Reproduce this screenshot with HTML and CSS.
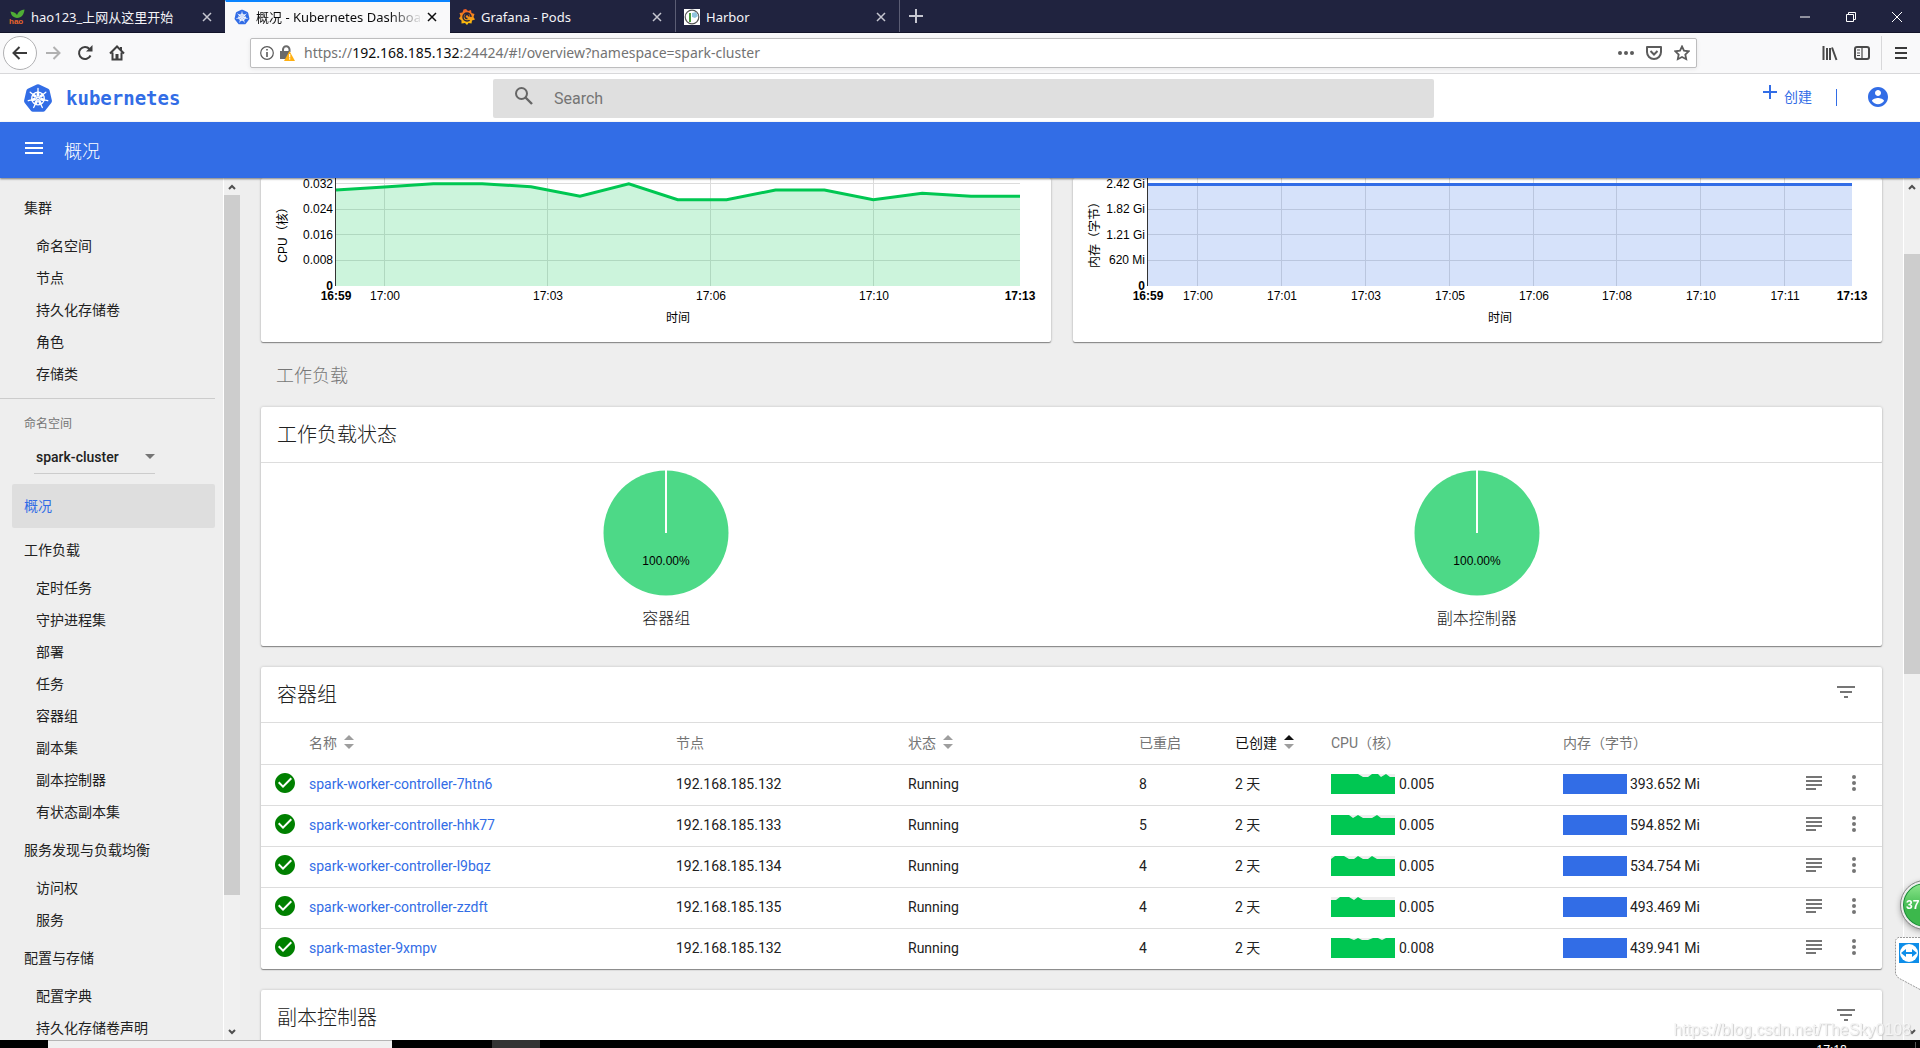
FILE: index.html
```html
<!DOCTYPE html>
<html lang="zh-CN">
<head>
<meta charset="utf-8">
<title>概况 - Kubernetes Dashboard</title>
<link rel="stylesheet" href="styles.css">
</head>
<body>
<svg class="defs" aria-hidden="true">
  <defs>
    <symbol id="k8s" viewBox="0 0 30 30">
      <path d="M13.8.6a2.6 2.6 0 0 1 2.4 0l9 4.3a2.6 2.6 0 0 1 1.4 1.8l2.3 10a2.6 2.6 0 0 1-.5 2.1l-6.3 8a2.6 2.6 0 0 1-2 1H9.900a2.600 2.600 0 0 1-2-1l-6.300-8a2.600 2.600 0 0 1-.5-2.100l2.300-10a2.600 2.600 0 0 1 1.400-1.800z" transform="translate(0 .9)" fill="#326de6"/>
      <g fill="none" stroke="#fff" stroke-width="1.300" stroke-linecap="round">
        <circle cx="15" cy="15.500" r="6.300"/>
        <g id="spoke"><path d="M15 14V5.500M14.300 12.500V9.500M15.700 12.500V9.500"/></g>
        <use href="#spoke" transform="rotate(51.430 15 15.500)"/>
        <use href="#spoke" transform="rotate(102.860 15 15.500)"/>
        <use href="#spoke" transform="rotate(154.290 15 15.500)"/>
        <use href="#spoke" transform="rotate(205.710 15 15.500)"/>
        <use href="#spoke" transform="rotate(257.140 15 15.500)"/>
        <use href="#spoke" transform="rotate(308.570 15 15.500)"/>
      </g>
      <circle cx="15" cy="15.500" r="1.700" fill="#fff"/><circle cx="15" cy="15.500" r=".7" fill="#326de6"/>
    </symbol>
    <symbol id="x" viewBox="0 0 10 10"><path d="M1 1l8 8M9 1L1 9" fill="none" stroke="currentColor" stroke-width="1.500"/></symbol>
    <symbol id="ok" viewBox="0 0 24 24"><path fill="#008000" d="M12 2C6.480 2 2 6.480 2 12s4.480 10 10 10 10-4.480 10-10S17.520 2 12 2zm-2 15l-5-5 1.410-1.410L10 14.170l7.590-7.590L19 8l-9 9z"/></symbol>
    <symbol id="logs" viewBox="0 0 16 14"><path d="M0 1h16M0 5h16M0 9h16M0 13h10" stroke="#757575" stroke-width="2" fill="none"/></symbol>
    <symbol id="more" viewBox="0 0 4 16"><g fill="#757575"><circle cx="2" cy="2" r="2"/><circle cx="2" cy="8" r="2"/><circle cx="2" cy="14" r="2"/></g></symbol>
    <symbol id="filter" viewBox="0 0 18 12"><path d="M0 1h18M3 6h12M7 11h4" stroke="#757575" stroke-width="2" fill="none"/></symbol>
    <symbol id="sort" viewBox="0 0 10 14"><path class="up" d="M5 0l5 5H0z"/><path d="M0 9h10l-5 5z" fill="#9e9e9e"/></symbol>
    <symbol id="chev" viewBox="0 0 8 6"><path d="M1 5l3-3 3 3" fill="none" stroke="#505050" stroke-width="2"/></symbol>
  </defs>
</svg>

<header class="tabs">
  <div class="tab">
    <svg class="fav" viewBox="0 0 16 16"><path d="M8 9C2 8 2 4 1.500 2.500 5 3 7 4 8 6 9.500 2 12 1 15.500.5 15 5 13 9 8 9z" fill="#4fae35"/><text x="0" y="15" font-size="8" font-weight="bold" fill="#e8632b" font-family="Liberation Sans">hao</text></svg>
    <span class="tab-title">hao123_上网从这里开始</span>
    <button class="tab-x" aria-label="关闭"><svg><use href="#x"/></svg></button>
  </div>
  <div class="tab tab-on">
    <svg class="fav"><use href="#k8s"/></svg>
    <span class="tab-title fade">概况 - Kubernetes Dashboard</span>
    <button class="tab-x" aria-label="关闭"><svg><use href="#x"/></svg></button>
  </div>
  <div class="tab">
    <svg class="fav" viewBox="0 0 16 16"><defs><linearGradient id="gf" x2="0" y2="1"><stop offset="0" stop-color="#f05a28"/><stop offset="1" stop-color="#fbca0a"/></linearGradient></defs><path d="M7 0l2 2 3-1 .5 3 3 1-1 3 1.500 2.500-3 1-.5 3-3-.5L8 16l-2-2-3.500.5v-3L0 9.500l1.500-2.500L.5 4l3-.5L4.500.5z" fill="url(#gf)"/><path d="M12 8a4 4 0 1 0-4 4c2 0 2.500-1 2.500-1M8.500 9.500a2 2 0 1 1 1.500-2" fill="none" stroke="#20233f" stroke-width="1.500"/></svg>
    <span class="tab-title">Grafana - Pods</span>
    <button class="tab-x" aria-label="关闭"><svg><use href="#x"/></svg></button>
  </div>
  <div class="tab tab-line">
    <svg class="fav" viewBox="0 0 16 16"><path d="M0 0h16v16H0z" fill="#fff"/><circle cx="8" cy="8" r="6.800" fill="none" stroke="#555" stroke-width="1.200"/><path d="M5 4h2v9H5z" fill="#4a9b3b"/><path d="M8 4l4-1 2 4-3 2-3-1z" fill="#8fc3dd"/></svg>
    <span class="tab-title">Harbor</span>
    <button class="tab-x" aria-label="关闭"><svg><use href="#x"/></svg></button>
  </div>
  <button class="new-tab" aria-label="新标签页"><svg viewBox="0 0 14 14"><path d="M7 0v14M0 7h14" stroke="#c5c6d0" stroke-width="2"/></svg></button>
  <div class="win">
    <button aria-label="最小化"><svg viewBox="0 0 10 10"><path d="M0 5h10" stroke="#fff"/></svg></button>
    <button aria-label="还原"><svg viewBox="0 0 10 10"><path d="M.5 2.500h7v7h-7zM2.500 2.500v-2h7v7h-2" fill="none" stroke="#fff"/></svg></button>
    <button aria-label="关闭窗口"><svg viewBox="0 0 10 10"><path d="M0 0l10 10M10 0L0 10" stroke="#fff"/></svg></button>
  </div>
</header>

<div class="toolbar">
  <div class="nav-btns">
    <button class="back" aria-label="后退"><svg viewBox="0 0 16 16"><path d="M15 8H2M7.500 2L1.500 8l6 6" fill="none" stroke="#3a3a3a" stroke-width="2"/></svg></button>
    <button aria-label="前进"><svg viewBox="0 0 16 16"><path d="M1 8h13M8.500 2l6 6-6 6" fill="none" stroke="#b1b1b1" stroke-width="2"/></svg></button>
    <button aria-label="刷新"><svg viewBox="0 0 16 16"><path d="M13.500 10.500A6 6 0 1 1 12.500 4" fill="none" stroke="#3f3f3f" stroke-width="2"/><path d="M15.500 0v6.500H9z" fill="#3f3f3f"/></svg></button>
    <button aria-label="主页"><svg viewBox="0 0 16 16"><path d="M1 8.500L8 1.500l7 7M3.500 7.500v7h9v-7" fill="none" stroke="#3f3f3f" stroke-width="2"/><path d="M6.500 9h3v6h-3zM11 2h2v4h-2z" fill="#3f3f3f"/></svg></button>
  </div>
  <div class="url">
    <svg class="i14" viewBox="0 0 14 14"><circle cx="7" cy="7" r="6.300" fill="none" stroke="#5a5a5a" stroke-width="1.200"/><path d="M6.200 3h1.600v1.600H6.200zM6.200 6h1.600v5H6.200z" fill="#5a5a5a"/></svg>
    <svg class="i15" viewBox="0 0 15 16"><path d="M3 6V4.500a3 3 0 0 1 6.500 0V7" fill="none" stroke="#6a6a6a" stroke-width="2"/><path d="M0 6h9v8H0z" fill="#6a6a6a"/><path d="M9.500 6L15 16H4z" fill="#ffb012"/><path d="M9 9h1.300v3.500H9zM9 13.300h1.300v1.300H9z" fill="#fff"/></svg>
    <span class="addr">https://<b>192.168.185.132</b>:24424/#!/overview?namespace=spark-cluster</span>
    <svg class="i16" viewBox="0 0 16 16"><g fill="#5c5c5c"><circle cx="2" cy="8" r="2"/><circle cx="8" cy="8" r="2"/><circle cx="14" cy="8" r="2"/></g></svg>
    <svg class="i16" viewBox="0 0 16 16"><path d="M1 2h14v5a7 7 0 0 1-14 0z" fill="none" stroke="#5c5c5c" stroke-width="2" stroke-linejoin="round"/><path d="M4.500 6L8 9.500 11.500 6" fill="none" stroke="#5c5c5c" stroke-width="2"/></svg>
    <svg class="i16" viewBox="0 0 16 16"><path d="M8 1.500l2 4.200 4.700.6-3.400 3.200.9 4.700L8 12l-4.200 2.200.9-4.700L1.300 6.300 6 5.700z" fill="none" stroke="#5c5c5c" stroke-width="1.800"/></svg>
  </div>
  <div class="tools">
    <svg class="i16" viewBox="0 0 16 16"><path d="M1.500 1v14M5 3v12M8 3v12M10 2.500L14.500 15" fill="none" stroke="#4a4a4a" stroke-width="2"/></svg>
    <svg class="i16" viewBox="0 0 16 16"><rect x="1" y="2" width="14" height="12" rx="2" fill="none" stroke="#4a4a4a" stroke-width="2"/><path d="M8 2v12M3 5h3M3 8h3M3 10.500h3" stroke="#4a4a4a" stroke-width="1.200"/></svg>
    <span class="menu"><svg class="i12" viewBox="0 0 12 12"><path d="M0 1h12M0 6h12M0 11h12" stroke="#3a3a3a" stroke-width="2"/></svg></span>
  </div>
</div>

<div class="brandbar">
  <a class="brand" href="#"><svg><use href="#k8s"/></svg><span>kubernetes</span></a>
  <label class="search">
    <svg viewBox="0 0 18 18"><circle cx="6.500" cy="6.500" r="5.500" fill="none" stroke="#666" stroke-width="2"/><path d="M10.500 10.500l6.500 6.500" stroke="#666" stroke-width="2.400"/></svg>
    <input type="text" placeholder="Search" aria-label="Search">
  </label>
  <div class="actions">
    <button class="create"><svg viewBox="0 0 14 14"><path d="M7 0v14M0 7h14" stroke="#326de6" stroke-width="2"/></svg><span>创建</span></button>
    <i class="sep"></i>
    <button class="user" aria-label="用户"><svg viewBox="2 2 20 20"><path fill="#326de6" d="M12 2C6.480 2 2 6.480 2 12s4.480 10 10 10 10-4.480 10-10S17.520 2 12 2zm0 3c1.660 0 3 1.340 3 3s-1.340 3-3 3-3-1.340-3-3 1.340-3 3-3zm0 14.200c-2.500 0-4.710-1.280-6-3.220.03-1.990 4-3.080 6-3.080 1.990 0 5.970 1.090 6 3.080-1.290 1.940-3.500 3.220-6 3.220z"/></svg></button>
  </div>
</div>

<div class="titlebar">
  <button aria-label="菜单"><svg viewBox="0 0 18 12"><path d="M0 1h18M0 6h18M0 11h18" stroke="#fff" stroke-width="2"/></svg></button>
  <h1>概况</h1>
</div>

<div class="body">
  <nav class="side">
    <a class="grp" href="#">集群</a>
    <a href="#">命名空间</a><a href="#">节点</a><a href="#">持久化存储卷</a><a href="#">角色</a><a href="#">存储类</a>
    <div class="ns">
      <label for="ns">命名空间</label>
      <span class="sel"><select id="ns"><option>spark-cluster</option></select><svg viewBox="0 0 10 5"><path d="M0 0h10L5 5z" fill="#757575"/></svg></span>
    </div>
    <a class="grp on" href="#">概况</a>
    <a class="grp" href="#">工作负载</a>
    <a href="#">定时任务</a><a href="#">守护进程集</a><a href="#">部署</a><a href="#">任务</a><a href="#">容器组</a><a href="#">副本集</a><a href="#">副本控制器</a><a href="#">有状态副本集</a>
    <a class="grp" href="#">服务发现与负载均衡</a>
    <a href="#">访问权</a><a href="#">服务</a>
    <a class="grp" href="#">配置与存储</a>
    <a href="#">配置字典</a><a href="#">持久化存储卷声明</a>
  </nav>
  <div class="bar bar-side"><svg><use href="#chev"/></svg><div class="track"><i></i></div><svg class="flip"><use href="#chev"/></svg></div>

  <main>
    <div class="charts">
      <section class="card">
        <svg viewBox="0 0 790 164" class="chart">
          <path d="M74 5.500h685M74 31.500h685M74 56.500h685M74 82.500h685M123.500 0v108M286.500 0v108M449.500 0v108M612.500 0v108" class="grid"/>
          <path d="M75 12L123.400 9 172.300 5.700 221.200 5.700 270 8.700 319 18.300 367.800 5.700 416.700 21.700 465.600 21.700 514.500 12 563.400 12 612.300 21.700 661.200 15.300 710 18.300 759 18.300V108H75z" fill="#00c752" fill-opacity=".2"/>
          <path d="M75 12L123.400 9 172.300 5.700 221.200 5.700 270 8.700 319 18.300 367.800 5.700 416.700 21.700 465.600 21.700 514.500 12 563.400 12 612.300 21.700 661.200 15.300 710 18.300 759 18.300" fill="none" stroke="#00c752" stroke-width="3"/>
          <path d="M74.500 0v108" stroke="#333"/>
          <g text-anchor="end"><text x="72" y="10">0.032</text><text x="72" y="35">0.024</text><text x="72" y="61">0.016</text><text x="72" y="86">0.008</text><text x="72" y="112" class="b">0</text></g>
          <g text-anchor="middle"><text x="75" y="122" class="b">16:59</text><text x="124" y="122">17:00</text><text x="287" y="122">17:03</text><text x="450" y="122">17:06</text><text x="613" y="122">17:10</text><text x="759" y="122" class="b">17:13</text><text x="417" y="144">时间</text><text transform="translate(26 54) rotate(-90)">CPU（核）</text></g>
        </svg>
      </section>
      <section class="card">
        <svg viewBox="0 0 809 164" class="chart">
          <path d="M74 5.500h705M74 31.500h705M74 56.500h705M74 82.500h705M124.500 0v108M208.500 0v108M292.500 0v108M376.500 0v108M460.500 0v108M543.500 0v108M627.500 0v108M711.500 0v108" class="grid"/>
          <path d="M75 6.500H779V108H75z" fill="#326de6" fill-opacity=".2"/>
          <path d="M75 6.500H779" stroke="#326de6" stroke-width="3"/>
          <path d="M74.500 0v108" stroke="#333"/>
          <g text-anchor="end"><text x="72" y="10">2.42 Gi</text><text x="72" y="35">1.82 Gi</text><text x="72" y="61">1.21 Gi</text><text x="72" y="86">620 Mi</text><text x="72" y="112" class="b">0</text></g>
          <g text-anchor="middle"><text x="75" y="122" class="b">16:59</text><text x="125" y="122">17:00</text><text x="209" y="122">17:01</text><text x="293" y="122">17:03</text><text x="377" y="122">17:05</text><text x="461" y="122">17:06</text><text x="544" y="122">17:08</text><text x="628" y="122">17:10</text><text x="712" y="122">17:11</text><text x="779" y="122" class="b">17:13</text><text x="427" y="144">时间</text><text transform="translate(26 54) rotate(-90)">内存（字节）</text></g>
        </svg>
      </section>
    </div>

    <h2>工作负载</h2>

    <section class="card">
      <header class="card-head"><h3>工作负载状态</h3></header>
      <div class="pies">
        <figure><svg viewBox="0 0 126 126"><circle cx="63" cy="63" r="62.500" fill="#4dd987"/><path d="M63 0v63" stroke="#fff" stroke-width="2"/><text x="63" y="95" text-anchor="middle">100.00%</text></svg><figcaption>容器组</figcaption></figure>
        <figure><svg viewBox="0 0 126 126"><circle cx="63" cy="63" r="62.500" fill="#4dd987"/><path d="M63 0v63" stroke="#fff" stroke-width="2"/><text x="63" y="95" text-anchor="middle">100.00%</text></svg><figcaption>副本控制器</figcaption></figure>
      </div>
    </section>

    <section class="card">
      <header class="card-head"><h3>容器组</h3><button aria-label="筛选"><svg class="filter"><use href="#filter"/></svg></button></header>
      <table>
        <colgroup><col class="c-ic"><col class="c-name"><col class="c-node"><col class="c-stat"><col class="c-n"><col class="c-n"><col class="c-cpu"><col class="c-mem"><col class="c-act"><col class="c-act"></colgroup>
        <thead><tr><th></th><th>名称<svg class="sort"><use href="#sort"/></svg></th><th>节点</th><th>状态<svg class="sort"><use href="#sort"/></svg></th><th>已重启</th><th class="sorted">已创建<svg class="sort"><use href="#sort"/></svg></th><th>CPU（核）</th><th>内存（字节）</th><th></th><th></th></tr></thead>
        <tbody>
          <tr><td><svg class="ok"><use href="#ok"/></svg></td><td><a href="#">spark-worker-controller-7htn6</a></td><td>192.168.185.132</td><td>Running</td><td>8</td><td>2 天</td><td><div class="metric"><svg viewBox="0 0 64 20"><path d="M0 0h27l5 3h5l4-3h6l3 3 5-3 4 3h5v17H0z"/></svg>0.005</div></td><td><div class="metric mem"><i></i>393.652 Mi</div></td><td><button aria-label="日志"><svg class="logs"><use href="#logs"/></svg></button></td><td><button aria-label="更多"><svg class="more"><use href="#more"/></svg></button></td></tr>
          <tr><td><svg class="ok"><use href="#ok"/></svg></td><td><a href="#">spark-worker-controller-hhk77</a></td><td>192.168.185.133</td><td>Running</td><td>5</td><td>2 天</td><td><div class="metric"><svg viewBox="0 0 64 20"><path d="M0 0h18l4 3 5-3 5 3h9l5-3 4 3h14v17H0z"/></svg>0.005</div></td><td><div class="metric mem"><i></i>594.852 Mi</div></td><td><button aria-label="日志"><svg class="logs"><use href="#logs"/></svg></button></td><td><button aria-label="更多"><svg class="more"><use href="#more"/></svg></button></td></tr>
          <tr><td><svg class="ok"><use href="#ok"/></svg></td><td><a href="#">spark-worker-controller-l9bqz</a></td><td>192.168.185.134</td><td>Running</td><td>4</td><td>2 天</td><td><div class="metric"><svg viewBox="0 0 64 20"><path d="M0 3l4-3h9l5 3h5l4-3 5 3h5l4-3 5 3h18v17H0z"/></svg>0.005</div></td><td><div class="metric mem"><i></i>534.754 Mi</div></td><td><button aria-label="日志"><svg class="logs"><use href="#logs"/></svg></button></td><td><button aria-label="更多"><svg class="more"><use href="#more"/></svg></button></td></tr>
          <tr><td><svg class="ok"><use href="#ok"/></svg></td><td><a href="#">spark-worker-controller-zzdft</a></td><td>192.168.185.135</td><td>Running</td><td>4</td><td>2 天</td><td><div class="metric"><svg viewBox="0 0 64 20"><path d="M0 3h5l4-3h9l5 3 4-3 5 3h32v17H0z"/></svg>0.005</div></td><td><div class="metric mem"><i></i>493.469 Mi</div></td><td><button aria-label="日志"><svg class="logs"><use href="#logs"/></svg></button></td><td><button aria-label="更多"><svg class="more"><use href="#more"/></svg></button></td></tr>
          <tr><td><svg class="ok"><use href="#ok"/></svg></td><td><a href="#">spark-master-9xmpv</a></td><td>192.168.185.132</td><td>Running</td><td>4</td><td>2 天</td><td><div class="metric"><svg viewBox="0 0 64 20"><path d="M0 0h18l5 2 4-2 4 2h6l5-2h5l4 2 4-2h9v20H0z"/></svg>0.008</div></td><td><div class="metric mem"><i></i>439.941 Mi</div></td><td><button aria-label="日志"><svg class="logs"><use href="#logs"/></svg></button></td><td><button aria-label="更多"><svg class="more"><use href="#more"/></svg></button></td></tr>
        </tbody>
      </table>
    </section>

    <section class="card">
      <header class="card-head"><h3>副本控制器</h3><button aria-label="筛选"><svg class="filter"><use href="#filter"/></svg></button></header>
    </section>
  </main>
  <div class="bar bar-main"><svg><use href="#chev"/></svg><div class="track"><i></i></div><svg class="flip"><use href="#chev"/></svg></div>
</div>

<footer class="taskbar"><span class="task-light"></span><span class="task-dark"></span><time>17:18</time></footer>

<div class="ball"><span>37</span></div>
<svg class="tv" viewBox="0 0 25 53"><path d="M25 .5H3L.5 3v34l3 4L25 52.500" fill="#fff" stroke="#999" stroke-dasharray="2 1"/><path d="M4 6h20v20H4z" fill="#0e8ee9"/><circle cx="14" cy="16" r="9" fill="#fff"/><path d="M6 16l5-4v3h6v-3l5 4-5 4v-3h-6v3z" fill="#0e8ee9"/></svg>
<div class="mark">https://blog.csdn.net/TheSky0108</div>
</body>
</html>
```
FILE: styles.css
```css
* { box-sizing: border-box; }
html, body { height: 100%; margin: 0; }
body {
  display: flex; flex-direction: column; overflow: hidden;
  font: 14px/20px Roboto, "Noto Sans CJK SC", sans-serif;
  color: #212121; background: #eee;
}
button { border: 0; padding: 0; background: none; font: inherit; color: inherit; display: flex; align-items: center; justify-content: center; }
svg { display: block; flex: none; }
a { color: inherit; text-decoration: none; }
h1, h2, h3, figure { margin: 0; font-weight: 300; }
.defs { position: absolute; width: 0; height: 0; }

/* browser tabs */
.tabs { flex: none; display: flex; height: 33px; background: #20233f; border-bottom: 1px solid #12142a; color: #f4f4f8; font: 13px/18px "Noto Sans", "Noto Sans CJK SC", sans-serif; }
.tab { width: 225px; display: flex; align-items: center; padding: 1px 13px 0 8px; border-left: 1px solid transparent; }
.tab-on { background: #f9f9fa; color: #0c0c0d; border-top: 2px solid #0a84ff; padding-top: 0; padding-bottom: 2px; margin-bottom: -1px; }
.tab-line { border-left-color: #5b5d74; border-right: 1px solid #5b5d74; }
.fav { width: 16px; height: 16px; margin-right: 6px; }
.tab-title { flex: 1; white-space: nowrap; overflow: hidden; }
.fade { -webkit-mask-image: linear-gradient(90deg, #000 80%, transparent); mask-image: linear-gradient(90deg, #000 80%, transparent); }
.tab-x { margin-left: 4px; }
.tab-x svg { width: 10px; height: 10px; }
.tab:not(.tab-on) .tab-x { color: #c5c6d0; }
.new-tab { width: 32px; }
.new-tab svg { width: 14px; height: 14px; }
.win { margin-left: auto; display: flex; }
.win button { width: 46px; padding-top: 2px; }
.win svg { width: 10px; height: 10px; }

/* address row */
.toolbar { flex: none; display: flex; align-items: center; height: 41px; background: #f9f9fa; border-bottom: 1px solid #d8d8da; }
.nav-btns { display: flex; width: 250px; padding-left: 3px; }
.nav-btns button { width: 32px; height: 34px; }
.nav-btns svg { width: 16px; height: 16px; }
.nav-btns .back { width: 34px; border: 1px solid #b1b1b3; border-radius: 50%; background: #fff; }
.url { flex: 1; height: 30px; display: flex; align-items: center; gap: 12px; padding: 0 6px 0 9px; background: #fff; border: 1px solid #bdbdbe; border-radius: 2px; box-shadow: 0 1px 4px rgba(0,0,0,.08); }
.addr { flex: 1; white-space: nowrap; color: #737373; font: 14px/20px "Noto Sans", sans-serif; margin-left: -3px; }
.addr b { font-weight: 400; color: #0c0c0d; }
.i12 { width: 12px; height: 12px; }
.i14 { width: 14px; height: 14px; }
.i15 { width: 15px; height: 16px; margin-left: -6px; }
.i16 { width: 16px; height: 16px; }
.tools { width: 223px; height: 34px; display: flex; align-items: center; justify-content: flex-end; gap: 16px; padding-right: 13px; }
.menu { height: 34px; display: flex; align-items: center; padding-left: 13px; margin-left: -5px; border-left: 1px solid #d8d8da; }

/* product header */
.brandbar { flex: none; height: 48px; display: flex; align-items: center; background: #fff; color: #326de6; }
.brand { width: 493px; display: flex; align-items: center; padding-left: 23px; gap: 13px; font: bold 19px/24px "DejaVu Sans Mono", monospace; }
.brand svg { width: 30px; height: 30px; }
.search { flex: 1; height: 39px; display: flex; align-items: center; gap: 21px; padding-left: 22px; border-radius: 2px; background: #dfdfdf; }
.search svg { width: 18px; height: 18px; margin-bottom: 4px; }
.search input { flex: 1; border: 0; background: none; font: 16px/20px Roboto, sans-serif; color: #212121; outline: 0; padding: 1px 0 0; }
.search input::placeholder { color: #757575; opacity: 1; }
.actions { width: 486px; display: flex; align-items: center; justify-content: flex-end; padding: 0 32px 2px 0; }
.create { gap: 7px; }
.create svg { width: 14px; height: 14px; margin-bottom: 10px; }
.sep { width: 1px; height: 17px; background: #326de6; margin: 0 31px 0 24px; }
.user svg { width: 20px; height: 20px; }
.titlebar { flex: none; height: 56px; display: flex; align-items: center; gap: 21px; padding-left: 25px; background: #326de6; color: #fff; box-shadow: 0 1px 2px rgba(0,0,0,.5); z-index: 1; }
.titlebar svg { width: 18px; height: 12px; margin-bottom: 4px; }
.titlebar h1 { font-size: 18px; line-height: 24px; padding-top: 4px; }

/* panes */
.body { flex: 1; min-height: 0; display: flex; }
.side { width: 223px; flex: none; overflow: hidden; padding: 8px 8px 0 0; }
.side a { display: block; line-height: 32px; padding-left: 36px; }
.side .grp { line-height: 44px; padding-left: 24px; }
.side .on { margin-left: 12px; padding-left: 12px; border-radius: 2px; background: #dedede; color: #326de6; }
.ns { margin-top: 8px; border-top: 1px solid #ccc; padding: 15px 0 10px 34px; }
.ns label { display: block; margin-left: -10px; font-size: 12px; line-height: 20px; color: #757575; }
.sel { display: flex; align-items: center; width: 121px; height: 34px; margin-top: 6px; border-bottom: 1px solid #ccc; }
.sel select { flex: 1; appearance: none; border: 0; background: none; padding: 0 0 0 2px; font: 500 14px/20px Roboto, sans-serif; color: #212121; }
.sel svg { width: 10px; height: 5px; }
.bar { flex: none; width: 17px; display: flex; flex-direction: column; align-items: center; background: #f0f0f0; border-left: 1px solid #fff; }
.bar svg { width: 8px; height: 6px; margin: 6px 0 5px; }
.bar .flip { transform: rotate(180deg); }
.track { flex: 1; align-self: stretch; display: flex; flex-direction: column; }
.track i { background: #cdcdcd; }
.bar-side i { flex: 846; }
.bar-side .track::after { content: ""; flex: 154; }
.bar-main .track::before { content: ""; flex: 71; }
.bar-main i { flex: 507; }
.bar-main .track::after { content: ""; flex: 422; }

main { flex: 1; min-width: 0; overflow: hidden; padding: 0 21px; }
.card { background: #fff; border-radius: 2px; box-shadow: 0 1px 1px rgba(0,0,0,.4), 0 0 3px rgba(0,0,0,.2); margin-bottom: 21px; }
.charts { display: grid; grid-template-columns: 790fr 809fr; gap: 22px; }
.charts .card { margin: 0; }
.chart { width: 100%; }
.chart text, .pies text { font: 12px "Liberation Sans", "Noto Sans CJK SC", sans-serif; fill: #000; }
.chart .b { font-weight: 700; }
.grid { stroke: #dcdcdc; fill: none; }
h2 { font-size: 18px; line-height: 24px; color: #777; padding: 22px 15px 19px; }
.card-head { height: 56px; display: flex; align-items: center; justify-content: space-between; padding: 0 27px 0 16px; border-bottom: 1px solid #ddd; }
h3 { font-size: 20px; line-height: 28px; padding-top: 1px; }
.filter { width: 18px; height: 12px; margin-bottom: 5px; }
.pies { display: flex; padding: 7px 0 15px; }
.pies figure { flex: 1; display: flex; flex-direction: column; align-items: center; }
.pies svg { width: 126px; height: 126px; }
figcaption { font-size: 16px; line-height: 24px; padding-top: 11px; }

table { width: 100%; table-layout: fixed; border-collapse: collapse; }
th, td { height: 41px; padding: 0; text-align: left; font-weight: 400; border-bottom: 1px solid #ddd; white-space: nowrap; }
td { padding-bottom: 2px; }
tbody tr:last-child td { border-bottom: 0; }
th { color: #757575; }
td a { color: #326de6; }
.c-ic { width: 48px; } .c-name { width: 367px; } .c-node { width: 232px; } .c-stat { width: 231px; } .c-n { width: 96px; } .c-cpu { width: 232px; } .c-mem { width: 243px; } .c-act { width: 38px; }
.sort { display: inline-block; width: 10px; height: 14px; margin-left: 7px; vertical-align: -1px; fill: #9e9e9e; }
.sorted { color: #111; }
.sorted .sort { fill: #111; }
.ok { width: 24px; height: 24px; margin: 0 0 1px 12px; }
.metric { display: flex; align-items: center; gap: 4px; }
.metric svg { width: 64px; height: 20px; background: #eee; fill: #00c752; }
.mem { gap: 3px; }
.mem i { width: 64px; height: 20px; background: #326de6; }
.logs { width: 16px; height: 14px; margin-bottom: 1px; }
.more { width: 4px; height: 16px; margin: 0 0 1px 8px; }

.taskbar { flex: none; height: 8px; display: flex; padding-left: 48px; overflow: hidden; background: #000; color: #fff; font: 12px/16px "Noto Sans", sans-serif; }
.task-light { width: 344px; background: #f0f0f0; border-top: 1px solid #b5b5b5; }
.task-dark { width: 48px; margin-left: 100px; background: #333; }
.taskbar time { margin: 2px 0 0 auto; padding-right: 68px; border-right: 1px solid #555; margin-right: 4px; }

/* desktop widgets lying over the window */
.ball { position: fixed; right: -29px; top: 881px; width: 48px; height: 48px; border-radius: 50%; border: 2px solid #eee; outline: 1px solid #888; background: linear-gradient(#8fe88f, #3cb84c 60%); box-shadow: inset 0 0 0 1px #1b8a3a, 0 2px 6px rgba(0,0,0,.4); color: #fff; font: bold 12px/44px "Liberation Sans", sans-serif; padding-left: 3px; }
.tv { position: fixed; right: 0; top: 937px; width: 25px; height: 53px; }
.mark { position: fixed; right: 9px; bottom: 7px; font: 16px/22px "Liberation Sans", sans-serif; color: #f4f4f4; text-shadow: 1px 1px 1px #ccc; }
```
